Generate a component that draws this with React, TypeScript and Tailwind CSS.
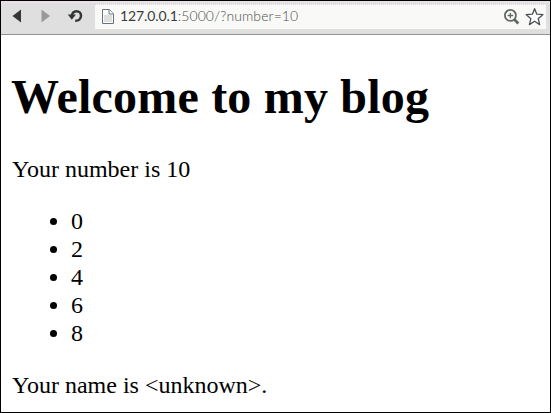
const numbers = [0, 2, 4, 6, 8];

function Toolbar() {
  return (
    <header className="flex h-[34px] shrink-0 items-start border-b border-[#929292] bg-[#e0dfdf] shadow-[inset_0_2px_0_#e9e0e8]">
      <svg className="h-[33px] w-[94px] shrink-0" viewBox="1 1 94 33">
        <path d="M12.5 16 21 9.5v13z" fill="#333637" />
        <path d="M50 16 41.5 9.5v13z" fill="#989898" />
        <path
          d="M71.8 16.2C72.5 9.5 81 10 81 15.8c0 3.4-2.6 5.2-5.8 5"
          fill="none"
          stroke="#333637"
          strokeWidth="2.5"
        />
        <path d="M67.8 14.5h8.2l-4.2 5.2z" fill="#333637" />
      </svg>
      <div className="mt-[3px] flex h-[25px] w-[451px] items-start border-t border-dotted border-[#dcd6da] bg-[#f9f9f7]">
        <svg className="ml-[6px] mt-[3px] h-[18px] w-[14px] shrink-0" viewBox="0 0 14 18">
          <path d="M1.5 1.5h7L12.5 6v9.5h-11z" fill="#fff" stroke="#68747c" />
          <path d="M3 7h8v7H3z" fill="#dededb" />
          <path d="M8 1.5V6h4.5" fill="#fff" stroke="#68747c" />
        </svg>
        <div className="ml-[5px] mt-px w-[380px] whitespace-nowrap font-['Lato',sans-serif] text-[14px] leading-[20px]">
          <span className="tracking-[-0.1px] text-[#3a3d3d]">127.0.0.1</span>
          <span className="font-light tracking-[0.1px] text-[#4c514e]">:5000/?number=10</span>
        </div>
        <svg className="h-[24px] w-[46px] shrink-0" viewBox="500 5 46 24">
          <circle cx="510.4" cy="15.4" r="5.5" fill="#fbfbfa" stroke="#626767" strokeWidth="1.8" />
          <path d="M507.6 15.5h5.6M510.4 12.7v5.6" stroke="#626767" strokeWidth="1.3" />
          <path d="m514.4 19.5 3.9 3.9" stroke="#626767" strokeWidth="2.8" />
          <path
            d="m534.6 8.7 2.2 5.5 6.2.4-4.8 4.1 1.5 5.9-5.1-3.4-5.2 3.4 1.5-5.9-4.8-4.1 6.3-.4z"
            fill="#fff"
            stroke="#4c5054"
            strokeWidth="1.3"
            strokeLinejoin="round"
          />
        </svg>
      </div>
    </header>
  );
}

export default function App() {
  return (
    <div className="flex h-[413px] w-[551px] flex-col overflow-hidden border border-black bg-white">
      <Toolbar />
      <main className="pl-[11px] font-['Liberation_Serif',serif] text-[24px] leading-[28px] text-black">
        <h1 className="-ml-px mt-[34px] whitespace-nowrap text-[48px] font-bold leading-[56px] tracking-[0.2px]">
          Welcome to my blog
        </h1>
        <p className="mt-[30px]">Your number is 10</p>
        <ul className="mt-[24px] list-disc pl-[59px]">
          {numbers.map((n) => (
            <li key={n}>{n}</li>
          ))}
        </ul>
        <p className="mt-[24px]">Your name is &lt;unknown&gt;.</p>
      </main>
    </div>
  );
}
